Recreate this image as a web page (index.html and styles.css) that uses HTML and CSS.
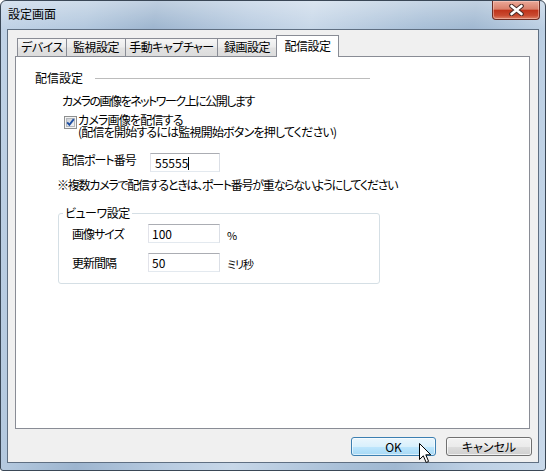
FILE: index.html
```html
<!DOCTYPE html>
<html lang="ja">
<head>
<meta charset="utf-8">
<title>設定画面</title>
<link rel="stylesheet" href="styles.css">
</head>
<body>
<div class="window">
  <div class="titlebar">
    <span class="title">設定画面</span>
    <div class="close">
      <svg width="15" height="12" viewBox="0 0 15 12"><path d="M2.5 2 L12.5 10 M12.5 2 L2.5 10" stroke="#4a2a26" stroke-width="4.6" stroke-linecap="round"/><path d="M2.5 2 L12.5 10 M12.5 2 L2.5 10" stroke="#ffffff" stroke-width="2.6" stroke-linecap="round"/></svg>
    </div>
  </div>
  <div class="client">
    <div class="tabs">
      <div class="tab t1">デバイス</div>
      <div class="tab t2">監視設定</div>
      <div class="tab t3">手動キャプチャー</div>
      <div class="tab t4">録画設定</div>
      <div class="tab active">配信設定</div>
    </div>
    <div class="panel">
      <div class="section-head"><span>配信設定</span><span class="rule"></span></div>
      <p class="desc">カメラの画像をネットワーク上に公開します</p>
      <div class="check-row">
        <span class="checkbox">
          <svg width="13" height="13" viewBox="0 0 13 13">
            <defs><linearGradient id="cbg" x1="0" y1="0" x2="1" y2="1"><stop offset="0" stop-color="#c9cdd3"/><stop offset="1" stop-color="#f7f7f7"/></linearGradient></defs>
            <rect x="0.5" y="0.5" width="12" height="12" fill="#f4f4f4" stroke="#8e8f8f"/>
            <rect x="2.5" y="2.5" width="8" height="8" fill="url(#cbg)" stroke="#b4b8bd"/>
            <path d="M3.2 6.4 L5.4 8.8 L9.8 3.2" fill="none" stroke="#1e4fa3" stroke-width="1.9"/>
          </svg>
        </span>
        <span class="check-label"><span class="line">カメラ画像を配信する</span><span class="line">(配信を開始するには監視開始ボタンを押してください)</span></span>
      </div>
      <div class="port-row">
        <span class="port-label">配信ポート番号</span>
        <div class="textbox port">55555<span class="caret"></span></div>
      </div>
      <p class="note">※複数カメラで配信するときは、ポート番号が重ならないようにしてください</p>
      <fieldset class="viewer">
        <legend>ビューワ設定</legend>
        <div class="field"><span class="flabel">画像サイズ</span><div class="textbox">100</div><span class="unit">%</span></div>
        <div class="field"><span class="flabel">更新間隔</span><div class="textbox">50</div><span class="unit">ミリ秒</span></div>
      </fieldset>
    </div>
    <div class="buttons">
      <button class="btn ok">OK</button>
      <button class="btn cancel">キャンセル</button>
    </div>
  </div>
  <svg class="cursor" width="13" height="21" viewBox="0 0 13 21"><path d="M0.5 0.5 L0.5 16.5 L4.3 12.8 L7.2 19.5 L9.6 18.4 L6.8 11.8 L11.8 11.8 Z" fill="#ffffff" stroke="#000000" stroke-width="1" stroke-linejoin="miter"/></svg>
</div>
</body>
</html>
```
FILE: styles.css
```css
* { box-sizing: border-box; }
html, body { margin: 0; padding: 0; }
body {
  background: #ffffff;
  font-family: "Noto Sans CJK JP", "Noto Sans", sans-serif;
  font-size: 12px;
  color: #000;
  font-feature-settings: "palt";
}
p { margin: 0; }

.window {
  position: relative;
  width: 546px;
  height: 471px;
  border: 1px solid #3a4756;
  border-radius: 6px 6px 3px 3px;
  padding: 0 6px 7px 6px;
  display: flex;
  flex-direction: column;
  background:
    linear-gradient(to bottom, rgba(255,255,255,0.35), rgba(255,255,255,0) 28px),
    linear-gradient(100deg, #c1d3e7 0%, #b3c8de 14%, #9db5cf 25%, #b9cce1 40%, #c7d7e8 50%, #a8bfd7 68%, #a0b8d1 76%, #bdd0e4 88%, #c9d9ea 100%);
}

.titlebar {
  height: 28px;
  margin: 0 -6px;
  padding-left: 7px;
  display: flex;
  justify-content: space-between;
  align-items: flex-start;
}
.title {
  margin-top: 6px;
  line-height: 14px;
  font-size: 12px;
  color: #000;
}
.close {
  width: 48px;
  height: 19px;
  margin-right: 5px;
  border: 1px solid #6d2d24;
  border-top: none;
  border-radius: 0 0 4px 4px;
  background: linear-gradient(#eba898 0%, #d9806b 45%, #c0341b 52%, #c94a30 80%, #de8368 100%);
  box-shadow: inset 0 0 0 1px rgba(255,220,210,0.45);
  display: flex;
  align-items: center;
  justify-content: center;
}

.client {
  flex: 1;
  border: 1px solid #5f6f82;
  background: #f0f0f0;
  padding-top: 5px;
  display: flex;
  flex-direction: column;
}

.tabs {
  display: flex;
  align-items: flex-end;
  height: 21px;
  margin-left: 9px;
}
.tab {
  height: 18px;
  border: 1px solid #898c95;
  border-bottom: none;
  margin-right: -1px;
  background: linear-gradient(#f6f6f6, #ececec 45%, #e2e2e2 55%, #dcdcdc);
  text-align: center;
  line-height: 16px;
  white-space: nowrap;
  letter-spacing: -0.5px;
}
.t1 { width: 50px; }
.t2 { width: 60px; }
.t3 { width: 93px; }
.t4 { width: 60px; }
.tab.active {
  width: 63px;
  height: 22px;
  margin-bottom: -1px;
  background: #ffffff;
  line-height: 20px;
  position: relative;
  z-index: 1;
}

.panel {
  width: 515px;
  height: 373px;
  margin-left: 7px;
  border: 1px solid #898c95;
  background: #ffffff;
  letter-spacing: -1px;
}

.section-head {
  display: flex;
  align-items: center;
  width: 335px;
  margin: 14px 0 0 19px;
  line-height: 14px;
  letter-spacing: 0;
}
.rule {
  flex: 1;
  height: 1px;
  margin-left: 12px;
  background: #bcbcbc;
}
.desc {
  margin: 9px 0 0 46px;
  line-height: 14px;
  letter-spacing: -1.5px;
}
.check-row {
  display: flex;
  margin: 6px 0 0 48px;
}
.checkbox {
  width: 13px;
  height: 13px;
  margin: 2px 1px 0 0;
  display: block;
}
.checkbox svg { display: block; }
.check-label {
  display: flex;
  flex-direction: column;
  letter-spacing: -0.8px;
}
.check-label .line {
  display: block;
  height: 11px;
  line-height: 11px;
  white-space: nowrap;
}
.check-label .line + .line { margin-top: 1px; }
.port-row {
  display: flex;
  margin: 16px 0 0 46px;
}
.port-label {
  width: 88px;
  line-height: 14px;
}
.textbox {
  width: 70px;
  height: 19px;
  border: 1px solid;
  border-color: #abadb3 #dbdfe6 #e3e9ef #e2e3ea;
  background: #ffffff;
  padding-left: 3px;
  line-height: 17px;
  letter-spacing: 0;
}
.textbox.port { padding-left: 4px; }
.caret {
  display: inline-block;
  width: 1px;
  height: 13px;
  background: #000;
  vertical-align: -2px;
}
.note {
  margin: 6px 0 0 41px;
  line-height: 14px;
  letter-spacing: -1.25px;
}

.viewer {
  width: 322px;
  margin: 14px 0 0 42px;
  border: 1px solid #d5dfe5;
  border-radius: 3px;
  padding: 4px 0 11px 4px;
  min-width: 0;
}
.viewer legend {
  padding: 0 2px;
  line-height: 14px;
  letter-spacing: -0.5px;
}
.field {
  display: flex;
  margin-left: 9px;
}
.field + .field { margin-top: 10px; }
.flabel {
  width: 76px;
  line-height: 14px;
  margin-top: 3px;
}
.field .textbox { width: 72px; }
.unit {
  margin: 4px 0 0 7px;
  line-height: 14px;
  font-size: 11px;
}

.buttons {
  display: flex;
  justify-content: flex-end;
  gap: 10px;
  margin-top: 8px;
  padding-right: 6px;
}
.btn {
  height: 19px;
  padding: 0;
  font: inherit;
  font-size: 12px;
  line-height: 17px;
  color: #000;
  border-radius: 3px;
  text-align: center;
}
.ok {
  width: 85px;
  border: 1px solid #3c7fb1;
  background: linear-gradient(#eaf6fd 0%, #d9f0fc 50%, #bee6fd 51%, #a7d9f5 100%);
  box-shadow: inset 0 0 0 1px rgba(255,255,255,0.6);
}
.cancel {
  width: 86px;
  border: 1px solid #707070;
  background: linear-gradient(#f2f2f2 0%, #ebebeb 50%, #dddddd 51%, #cfcfcf 100%);
  box-shadow: inset 0 0 0 1px rgba(255,255,255,0.7);
}

.cursor {
  position: absolute;
  left: 418px;
  top: 442px;
}
```
